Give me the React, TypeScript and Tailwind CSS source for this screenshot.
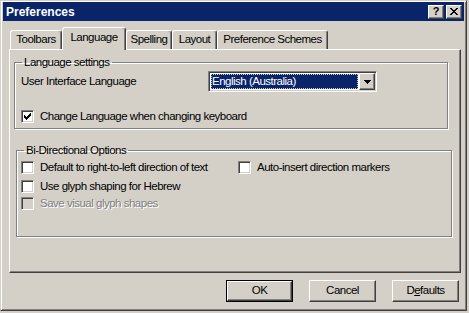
import React from 'react';

const raised =
  'border border-t-white border-l-white border-r-[#404040] border-b-[#404040] shadow-[inset_-1px_-1px_0_#808080]';
const etched = 'border border-[#808080] shadow-[inset_1px_1px_0_#fff,1px_1px_0_#fff]';

function Check({ checked = false, disabled = false }: { checked?: boolean; disabled?: boolean }) {
  return (
    <span
      className={`w-[13px] h-[13px] shrink-0 flex items-center justify-center border border-t-[#808080] border-l-[#808080] border-r-white border-b-white shadow-[inset_1px_1px_0_#404040,inset_-1px_-1px_0_#d4d0c8] ${
        disabled ? 'bg-[#d4d0c8]' : 'bg-white'
      }`}
    >
      {checked && (
        <svg width="7" height="7" viewBox="0 0 7 7">
          <path d="M0 2h1v1h1v1h1V3h1V2h1V1h1V0h1v3H6v1H5v1H4v1H3v1H2V6H1V5H0z" fill="#000" />
        </svg>
      )}
    </span>
  );
}

function Option({ label, checked, disabled }: { label: string; checked?: boolean; disabled?: boolean }) {
  return (
    <div className="flex items-center gap-[6px] h-[13px]">
      <Check checked={checked} disabled={disabled} />
      <span className={disabled ? 'text-[#808080] [text-shadow:1px_1px_0_#fff]' : 'text-black'}>{label}</span>
    </div>
  );
}

function Tab({ label, width, active }: { label: string; width: string; active?: boolean }) {
  return (
    <div
      className={`${width} relative flex items-center justify-center border-l border-t border-white rounded-t-[3px] shadow-[inset_-1px_0_0_#808080] border-r border-r-[#404040] bg-[#d4d0c8] ${
        active ? 'h-[23px] z-10 -mb-px pb-[3px]' : 'h-[19px]'
      }`}
    >
      {label}
    </div>
  );
}

function Button({ label, isDefault }: { label: React.ReactNode; isDefault?: boolean }) {
  return (
    <div className={`w-[67px] h-[22px] ${isDefault ? 'border border-black' : ''}`}>
      <div className={`w-full h-full flex items-center justify-center ${raised}`}>{label}</div>
    </div>
  );
}

export default function App() {
  return (
    <div className="w-[469px] h-[313px] bg-[#d4d0c8] font-['Liberation_Sans',Arial,sans-serif] text-[11.5px] tracking-[-0.5px] text-black overflow-hidden">
      <div className="w-[467px] h-[311px] border border-t-[#d4d0c8] border-l-[#d4d0c8] border-r-[#404040] border-b-[#404040] shadow-[inset_1px_1px_0_#fff,inset_-1px_-1px_0_#808080] pt-px px-[2px] flex flex-col">
        <div className="h-[19px] bg-[#0a246a] flex items-center justify-between pl-[3px] pr-[2px]">
          <span className="text-white font-bold text-[12px] tracking-normal">Preferences</span>
          <div className="flex gap-[2px]">
            <div className={`w-[16px] h-[14px] flex items-center justify-center bg-[#d4d0c8] font-bold text-[11px] tracking-normal leading-none ${raised}`}>
              ?
            </div>
            <div className={`w-[16px] h-[14px] flex items-center justify-center bg-[#d4d0c8] ${raised}`}>
              <svg width="8" height="7" viewBox="0 0 8 7">
                <path d="M0 0h2v1h1v1h2V1h1V0h2v1H7v1H6v1H5v1h1v1h1v1h1v1H6V6H5V5H3v1H2v1H0V6h1V5h1V4h1V3H2V2H1V1H0z" fill="#000" />
              </svg>
            </div>
          </div>
        </div>

        <div className="flex items-end pl-[7px] mt-[6px]">
          <Tab label="Toolbars" width="w-[52px]" />
          <Tab label="Language" width="w-[64px]" active />
          <Tab label="Spelling" width="w-[46px]" />
          <Tab label="Layout" width="w-[45px]" />
          <Tab label="Preference Schemes" width="w-[111px]" />
        </div>

        <div className="ml-[6px] w-[452px] h-[224px] border border-t-white border-l-white border-r-[#404040] border-b-[#404040] shadow-[inset_-1px_-1px_0_#808080] pt-[5px]">
          <fieldset className={`ml-[4px] w-[434px] h-[74px] ${etched} px-[6px]`}>
            <legend className="ml-[1px] px-[2px] leading-[14px]">Language settings</legend>
            <div className="flex items-center mt-[2px]">
              <span className="w-[187px]">User Interface Language</span>
              <div className="w-[169px] h-[21px] bg-white border border-t-[#808080] border-l-[#808080] border-r-white border-b-white shadow-[inset_1px_1px_0_#404040,inset_-1px_-1px_0_#d4d0c8] p-[2px] flex">
                <div className="flex-1 bg-[#0a246a] text-white outline outline-1 outline-dotted outline-[#d4d0c8] -outline-offset-1 flex items-center pl-[1px]">
                  English (Australia)
                </div>
                <div className={`w-[16px] h-[17px] -mt-px -mr-px bg-[#d4d0c8] flex items-center justify-center ml-[1px] ${raised}`}>
                  <svg width="7" height="4" viewBox="0 0 7 4">
                    <path d="M0 0h7v1H6v1H5v1H4v1H3V3H2V2H1V1H0z" fill="#000" />
                  </svg>
                </div>
              </div>
            </div>
            <div className="mt-[18px]">
              <Option label="Change Language when changing keyboard" checked />
            </div>
          </fieldset>

          <fieldset className={`ml-[6px] mt-[14px] w-[436px] h-[94px] ${etched} px-[4px]`}>
            <legend className="ml-[3px] px-[2px] leading-[14px]">Bi-Directional Options</legend>
            <div className="flex flex-col gap-[6px] mt-[4px]">
              <div className="flex">
                <div className="w-[217px]">
                  <Option label="Default to right-to-left direction of text" />
                </div>
                <Option label="Auto-insert direction markers" />
              </div>
              <Option label="Use glyph shaping for Hebrew" />
              <div className="-mt-[2px]">
                <Option label="Save visual glyph shapes" disabled />
              </div>
            </div>
          </fieldset>
        </div>

        <div className="flex justify-end gap-[16px] pr-[5px] mt-[7px]">
          <Button label="OK" isDefault />
          <Button label="Cancel" />
          <Button
            label={
              <span>
                D<span className="underline">e</span>faults
              </span>
            }
          />
        </div>
      </div>
    </div>
  );
}
